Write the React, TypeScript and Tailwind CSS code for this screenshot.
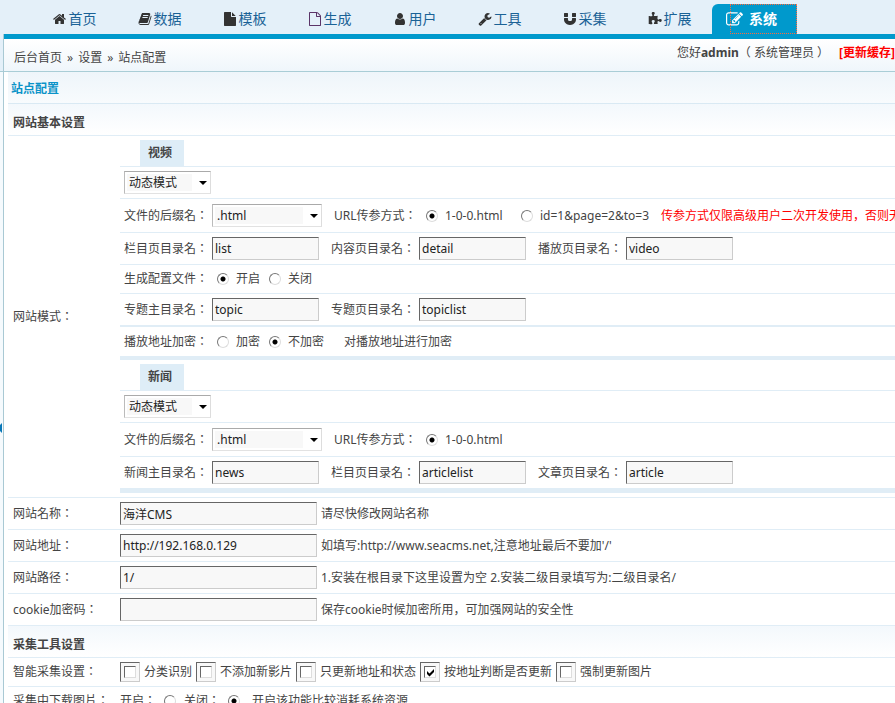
import type { ReactNode } from "react";

const ICONS = {
  home: "M1408 992v480q0 26-19 45t-45 19h-384v-384h-256v384h-384q-26 0-45-19t-19-45v-480q0-1 .5-3t.5-3l575-474 575 474q1 2 1 6zm223-69l-62 74q-8 9-21 11h-3q-13 0-21-7l-692-577-692 577q-12 8-24 7-13-2-21-11l-62-74q-8-10-7-23.5t11-21.5l719-599q32-26 76-26t76 26l244 204v-195q0-14 9-23t23-9h192q14 0 23 9t9 23v408l219 182q10 8 11 21.5t-7 23.5z",
  book: "M1703 478q40 57 18 129l-275 906q-19 64-76.5 107.5t-122.5 43.5h-923q-77 0-148.5-53.5t-99.5-131.5q-24-67-2-127 0-4 3-27t4-37q1-8-3-21.5t-3-19.5q2-11 8-21t16.5-23.5 16.5-23.5q23-38 45-91.5t30-91.5q3-10 .5-30t-.5-28q3-11 17-28t17-23q21-36 42-92t25-90q1-9-2.5-32t.5-28q4-13 22-30.5t22-22.5q19-26 42.5-84.5t27.5-96.5q1-8-3-25.5t-2-26.5q2-8 9-18t18-23 17-21q8-12 16.5-30.5t15-35 16-36 19.5-32 26.5-23.5 36-11.5 47.5 5.5l-1 3q38-9 51-9h761q74 0 114 56t18 130l-274 906q-36 119-71.5 153.5t-128.5 34.5h-869q-27 0-38 15-11 16-1 43 24 70 144 70h923q29 0 56-15.5t35-41.5l300-987q7-22 5-57 38 15 59 43zm-1064 2q-4 13 2 22.5t20 9.5h608q13 0 25.5-9.5t16.5-22.5l21-64q4-13-2-22.5t-20-9.5h-608q-13 0-25.5 9.5t-16.5 22.5zm-83 256q-4 13 2 22.5t20 9.5h608q13 0 25.5-9.5t16.5-22.5l21-64q4-13-2-22.5t-20-9.5h-608q-13 0-25.5 9.5t-16.5 22.5z",
  file: "M1152 512v-472q22 14 36 28l408 408q14 14 28 36h-472zm-128 32q0 40 28 68t68 28h544v1056q0 40-28 68t-68 28h-1344q-40 0-68-28t-28-68v-1600q0-40 28-68t68-28h800v544z",
  fileOutline: "M1596 380q28 28 48 76t20 88v1152q0 40-28 68t-68 28h-1344q-40 0-68-28t-28-68v-1600q0-40 28-68t68-28h896q40 0 88 20t76 48zm-444-244v376h376q-10-29-22-41l-313-313q-12-12-41-22zm384 1528v-1024h-416q-40 0-68-28t-28-68v-416h-768v1536h1280z",
  user: "M1536 1399q0 109-62.5 187t-150.5 78h-854q-88 0-150.5-78t-62.5-187q0-85 8.5-160.5t31.5-152 58.5-131 94-89 134.5-34.5q131 128 313 128t313-128q76 0 134.5 34.5t94 89 58.5 131 31.5 152 8.5 160.5zm-256-887q0 159-112.5 271.5t-271.5 112.5-271.5-112.5-112.5-271.5 112.5-271.5 271.5-112.5 271.5 112.5 112.5 271.5z",
  wrench: "M448 1472q0-26-19-45t-45-19-45 19-19 45 19 45 45 19 45-19 19-45zm644-420l-682 682q-37 37-90 37-52 0-91-37l-106-108q-38-36-38-90 0-53 38-91l681-681q39 98 114.5 173.5t173.5 114.5zm634-435q0 39-23 106-47 134-164.5 217.5t-258.5 83.5q-185 0-316.5-131.5t-131.5-316.5 131.5-316.5 316.5-131.5q58 0 121.5 16.5t107.5 46.5q16 11 16 28t-16 28l-293 169v224l193 107q5-3 79-48.5t135.5-81 70.5-35.5q15 0 23.5 10t8.5 25z",
  magnet: "M1664 832v128q0 201-98.5 362t-274 251.5-395.5 90.5-395.5-90.5-274-251.5-98.5-362v-128q0-26 19-45t45-19h384q26 0 45 19t19 45v128q0 52 23.5 90t53.5 57 71 30 64 13 44 2 44-2 64-13 71-30 53.5-57 23.5-90v-128q0-26 19-45t45-19h384q26 0 45 19t19 45zm-1024-640v384q0 26-19 45t-45 19h-384q-26 0-45-19t-19-45v-384q0-26 19-45t45-19h384q26 0 45 19t19 45zm1024 0v384q0 26-19 45t-45 19h-384q-26 0-45-19t-19-45v-384q0-26 19-45t45-19h384q26 0 45 19t19 45z",
  puzzle: "M1755 1082q0 81-44.5 135t-123.5 54q-41 0-77.5-17.5t-59-38-56.5-38-71-17.5q-110 0-110 124 0 39 16 115t15 115v5q-22 0-33 1-34 3-97.5 11.5t-115.5 13.5-98 5q-61 0-103-26.5t-42-83.5q0-37 17.5-71t38-56.5 38-59 17.5-77.5q0-79-54-123.5t-135-44.5q-84 0-143 45.5t-59 127.5q0 43 15 83t33.5 64.5 33.5 53 15 50.5q0 45-46 89-37 35-117 35-95 0-245-24-9-2-27.5-4t-27.5-4l-13-2q-1 0-3-1-2 0-2-1v-1024q2 1 17.5 3.5t34 5 21.5 3.5q150 24 245 24 80 0 117-35 46-44 46-89 0-22-15-50.5t-33.5-53-33.5-64.5-15-83q0-82 59-127.5t144-45.5q80 0 134 44.5t54 123.5q0 41-17.5 77.5t-38 59-38 56.5-17.5 71q0 57 42 83.5t103 26.5q64 0 180-15t163-17v2q-1 2-3.5 17.5t-5 34-3.5 21.5q-24 150-24 245 0 80 35 117 44 46 89 46 22 0 50.5-15t53-33.5 64.5-33.5 83-15q82 0 127.5 59t45.5 143z",
  edit: "M888 1184l116-116-152-152-116 116v56h96v96h56zm440-720q-16-16-33 1l-350 350q-17 17-1 33t33-1l350-350q17-17 1-33zm80 594v190q0 119-84.5 203.5t-203.5 84.5h-832q-119 0-203.5-84.5t-84.5-203.5v-832q0-119 84.5-203.5t203.5-84.5h832q63 0 117 25 15 7 18 23 3 17-9 29l-49 49q-14 14-32 8-23-6-45-6h-832q-66 0-113 47t-47 113v832q0 66 47 113t113 47h832q66 0 113-47t47-113v-126q0-13 9-22l64-64q15-15 35-7t20 29zm-96-738l288 288-672 672h-288v-288zm444 132l-92 92-288-288 92-92q28-28 68-28t68 28l152 152q28 28 28 68t-28 68z",
};

type IconName = keyof typeof ICONS;

const NAV: { icon: IconName; text: string; color: string }[] = [
  { icon: "home", text: "首页", color: "text-[#333]" },
  { icon: "book", text: "数据", color: "text-[#333]" },
  { icon: "file", text: "模板", color: "text-[#333]" },
  { icon: "fileOutline", text: "生成", color: "text-[#5b3468]" },
  { icon: "user", text: "用户", color: "text-[#333]" },
  { icon: "wrench", text: "工具", color: "text-[#333]" },
  { icon: "magnet", text: "采集", color: "text-[#333]" },
  { icon: "puzzle", text: "扩展", color: "text-[#333]" },
];

function Icon({ name, className }: { name: IconName; className: string }) {
  return (
    <svg viewBox="0 0 1792 1792" className={className} fill="currentColor" aria-hidden="true">
      <path d={ICONS[name]} />
    </svg>
  );
}

const LABEL_FONT = "font-['Noto_Sans','Noto_Sans_CJK_TC',sans-serif]";
const SUNKEN = "border border-t-[#666] border-l-[#666] border-r-[#ccc] border-b-[#ccc] bg-[#f8f8f8]";

function TextField({ id, label, value }: { id: string; label: string; value: string }) {
  return (
    <div className="flex shrink-0 items-center gap-1">
      <label htmlFor={id} className={`w-21 ${LABEL_FONT}`}>{label}</label>
      <input id={id} defaultValue={value} className={`h-[23px] w-[107px] pl-0.5 text-[#222] ${SUNKEN}`} />
    </div>
  );
}

function Select({ id, value, width, label }: { id: string; value: string; width: string; label?: string }) {
  return (
    <div className={`grid h-[23px] shrink-0 items-center ${width}`}>
      <select
        id={id}
        aria-label={label}
        className="col-start-1 row-start-1 h-[23px] w-full appearance-none border border-t-[#aaa] border-r-[#ddd] border-b-[#e2e2e2] border-l-[#bbb] bg-[linear-gradient(#f8f8f8,#f8f8f8)] bg-[length:calc(100%-20px)_17px] bg-[position:2px_2px] bg-no-repeat pl-1 text-[#222]"
      >
        <option>{value}</option>
      </select>
      <svg viewBox="0 0 8 4" className="pointer-events-none col-start-1 row-start-1 mr-1 h-1 w-2 justify-self-end" aria-hidden="true">
        <path d="M0 0h8L4 4z" fill="#000" />
      </svg>
    </div>
  );
}

function Radio({ id, name, checked }: { id: string; name: string; checked?: boolean }) {
  return (
    <input
      type="radio"
      id={id}
      name={name}
      defaultChecked={checked}
      className="size-3 shrink-0 appearance-none rounded-full border border-t-[#777] border-r-[#ddd] border-b-[#ddd] border-l-[#777] bg-white checked:bg-[radial-gradient(circle,#000_2px,transparent_3px)]"
    />
  );
}

function Check({ id, label, checked }: { id: string; label: string; checked?: boolean }) {
  return (
    <div className="flex shrink-0 items-center gap-1">
      <span className={`grid size-5 place-items-center ${SUNKEN}`}>
        <input
          type="checkbox"
          id={id}
          defaultChecked={checked}
          className="peer col-start-1 row-start-1 size-3 appearance-none border border-t-[#666] border-r-[#ddd] border-b-[#ddd] border-l-[#666] bg-white"
        />
        <svg viewBox="0 0 9 9" className="pointer-events-none invisible col-start-1 row-start-1 size-[9px] peer-checked:visible" aria-hidden="true">
          <path d="M1 3l2.5 2.5L8 1v3L3.500 8.500 1 6z" fill="#000" />
        </svg>
      </span>
      <label htmlFor={id}>{label}</label>
    </div>
  );
}

function Line({ className, children }: { className: string; children: ReactNode }) {
  return <div className={`flex items-center border-[#e0edf6] pl-1 ${className}`}>{children}</div>;
}

function GroupTab({ children }: { children: ReactNode }) {
  return (
    <div className="flex border-b border-[#e0edf6] pt-1 pl-5">
      <h3 className="flex h-[26px] w-11 items-center bg-[#deedf7] pl-2 font-bold">{children}</h3>
    </div>
  );
}

function SectionHead({ children }: { children: ReactNode }) {
  return (
    <h2 className="flex h-8 items-center border-b border-[#e0edf6] bg-linear-to-b from-[#f3f8fc] to-white pt-1.5 pl-[5px] font-bold">
      {children}
    </h2>
  );
}

function SiteRow({ id, label, value, hint }: { id: string; label: string; value: string; hint: string }) {
  return (
    <div className="flex h-8 items-center border-b border-[#e0edf6] pl-[5px]">
      <label htmlFor={id} className={`w-[107px] shrink-0 ${LABEL_FONT}`}>{label}</label>
      <input id={id} defaultValue={value} className={`h-[23px] w-[197px] pl-0.5 text-[#222] ${SUNKEN}`} />
      <span className="pl-1">{hint}</span>
    </div>
  );
}

function SuffixLine({ prefix, extra }: { prefix: string; extra?: boolean }) {
  return (
    <Line className="h-[34px] border-b">
      <label htmlFor={`${prefix}-suffix`} className={`mr-1 w-21 shrink-0 ${LABEL_FONT}`}>文件的后缀名：</label>
      <Select id={`${prefix}-suffix`} value=".html" width="w-[110px]" />
      <span className={`ml-3 w-[92px] shrink-0 ${LABEL_FONT}`}>URL传参方式：</span>
      <Radio id={`${prefix}-url-path`} name={`${prefix}-url`} checked />
      <label htmlFor={`${prefix}-url-path`} className="ml-[7px] w-[76px] shrink-0">1-0-0.html</label>
      {extra && (
        <>
          <Radio id={`${prefix}-url-query`} name={`${prefix}-url`} />
          <label htmlFor={`${prefix}-url-query`} className="ml-[7px] w-[121px] shrink-0">id=1&amp;page=2&amp;to=3</label>
          <span className="shrink-0 text-[#f00]">传参方式仅限高级用户二次开发使用，否则无法访问</span>
        </>
      )}
    </Line>
  );
}

export default function App() {
  return (
    <div className="flex h-screen flex-col overflow-hidden bg-white font-['Noto_Sans','Noto_Sans_CJK_SC',sans-serif] text-[12px] leading-4 whitespace-nowrap text-[#444]">
      <header className="shrink-0 bg-[#e4f0f9] pl-8">
        <nav className="flex h-[34px] items-end text-[14px] leading-5 text-[#1a6296]">
          {NAV.map((n) => (
            <a key={n.text} href="#" className="flex h-[30px] w-[85px] shrink-0 items-center justify-center gap-0.5">
              <Icon name={n.icon} className={`size-3.5 ${n.color}`} />
              {n.text}
            </a>
          ))}
          <a href="#" className="grid h-[30px] w-[85px] shrink-0 rounded-tl-md bg-[#0099cc] font-bold text-white">
            <span className="col-start-1 row-start-1 flex items-center gap-1.5 pl-3.5">
              <Icon name="edit" className="size-[17px]" />
              系统
            </span>
            <span className="col-start-1 row-start-1 ml-[18px] border border-dotted border-[#ff6a3c]" />
          </a>
        </nav>
      </header>

      <div className="flex min-h-0 flex-1">
        <aside className="flex w-[3px] shrink-0 flex-col bg-[#f5fafd]">
          <div className="h-[38px] shrink-0 border-b border-[#a9cdd6] bg-[#e4f0f9]" />
          <div className="flex flex-1 items-center pt-20">
            <svg viewBox="0 0 2 10" className="h-[10px] w-0.5" aria-hidden="true">
              <path d="M2 0v10L0 8V2z" fill="#0a78b8" />
            </svg>
          </div>
        </aside>

        <div className="flex min-w-0 flex-1 flex-col border-l border-[#a9c9d4]">
          <div className="flex h-[38px] shrink-0 justify-between border-t-5 border-b border-t-[#0099cc] border-b-[#a9cdd6] bg-linear-to-b from-white to-[#eff6fb] pl-2.5">
            <div className="flex items-center gap-[5px] pt-1.5">
              <a href="#">后台首页</a>
              <span>»</span>
              <a href="#">设置</a>
              <span>»</span>
              <span>站点配置</span>
            </div>
            <div className="flex items-center pb-1">
              <span>您好<b>admin</b>（ 系统管理员 ）</span>
              <a href="#" className="ml-2.5 font-bold text-[#f00]">[更新缓存]</a>
            </div>
          </div>

          <form className="min-h-0 flex-1 overflow-hidden pl-1">
            <h1 className="flex h-8 items-center border-b border-[#d9e9f3] bg-linear-to-b from-[#eef5fa] to-[#f8fbfd] pt-0.5 pl-[3px] font-bold text-[#0b93c8]">
              站点配置
            </h1>
            <SectionHead>网站基本设置</SectionHead>

            <div className="flex border-b border-[#e0edf6] pb-1">
              <div className={`flex w-28 shrink-0 items-center pt-1 pl-[5px] ${LABEL_FONT}`}>网站模式：</div>
              <div className="min-w-0 flex-1 overflow-hidden">
                <GroupTab>视频</GroupTab>
                <Line className="h-8 border-b">
                  <Select id="video-mode" label="视频" value="动态模式" width="w-[87px]" />
                </Line>
                <SuffixLine prefix="video" extra />
                <Line className="h-8 gap-3 border-b">
                  <TextField id="list-dir" label="栏目页目录名：" value="list" />
                  <TextField id="detail-dir" label="内容页目录名：" value="detail" />
                  <TextField id="play-dir" label="播放页目录名：" value="video" />
                </Line>
                <Line className="h-[29px] border-b">
                  <span className={`w-[93px] ${LABEL_FONT}`}>生成配置文件：</span>
                  <Radio id="config-on" name="config" checked />
                  <label htmlFor="config-on" className="ml-[7px] w-[33px]">开启</label>
                  <Radio id="config-off" name="config" />
                  <label htmlFor="config-off" className="ml-[7px]">关闭</label>
                </Line>
                <Line className="h-[33px] gap-3 border-b-2">
                  <TextField id="topic-dir" label="专题主目录名：" value="topic" />
                  <TextField id="topiclist-dir" label="专题页目录名：" value="topiclist" />
                </Line>
                <Line className="h-[33px] border-b-4">
                  <span className={`w-[93px] ${LABEL_FONT}`}>播放地址加密：</span>
                  <Radio id="encrypt-on" name="encrypt" />
                  <label htmlFor="encrypt-on" className="ml-[7px] w-[33px]">加密</label>
                  <Radio id="encrypt-off" name="encrypt" checked />
                  <label htmlFor="encrypt-off" className="ml-[7px] w-14">不加密</label>
                  <span>对播放地址进行加密</span>
                </Line>

                <GroupTab>新闻</GroupTab>
                <Line className="h-8 border-b">
                  <Select id="news-mode" label="新闻" value="动态模式" width="w-[87px]" />
                </Line>
                <SuffixLine prefix="news" />
                <Line className="h-9 gap-3 border-b-5">
                  <TextField id="news-dir" label="新闻主目录名：" value="news" />
                  <TextField id="articlelist-dir" label="栏目页目录名：" value="articlelist" />
                  <TextField id="article-dir" label="文章页目录名：" value="article" />
                </Line>
              </div>
            </div>

            <SiteRow id="site-name" label="网站名称：" value="海洋CMS" hint="请尽快修改网站名称" />
            <SiteRow id="site-url" label="网站地址：" value="http://192.168.0.129" hint="如填写:http://www.seacms.net,注意地址最后不要加'/'" />
            <SiteRow id="site-path" label="网站路径：" value="1/" hint="1.安装在根目录下这里设置为空 2.安装二级目录填写为:二级目录名/" />
            <SiteRow id="cookie-key" label="cookie加密码：" value="" hint="保存cookie时候加密所用，可加强网站的安全性" />

            <SectionHead>采集工具设置</SectionHead>
            <div className="flex h-[29px] items-center gap-1 border-b border-[#e0edf6] pl-[5px]">
              <span className={`w-[103px] shrink-0 ${LABEL_FONT}`}>智能采集设置：</span>
              <Check id="auto-class" label="分类识别" />
              <Check id="skip-new" label="不添加新影片" />
              <Check id="only-address" label="只更新地址和状态" />
              <Check id="by-address" label="按地址判断是否更新" checked />
              <Check id="force-image" label="强制更新图片" />
            </div>
            <div className="flex h-7 items-center pl-[5px]">
              <span className={`w-[107px] shrink-0 ${LABEL_FONT}`}>采集中下载图片：</span>
              <label htmlFor="download-on" className={`w-11 ${LABEL_FONT}`}>开启：</label>
              <Radio id="download-on" name="download" />
              <label htmlFor="download-off" className={`ml-2 w-11 ${LABEL_FONT}`}>关闭：</label>
              <Radio id="download-off" name="download" checked />
              <span className="ml-3">开启该功能比较消耗系统资源</span>
            </div>
          </form>
        </div>
      </div>
    </div>
  );
}
